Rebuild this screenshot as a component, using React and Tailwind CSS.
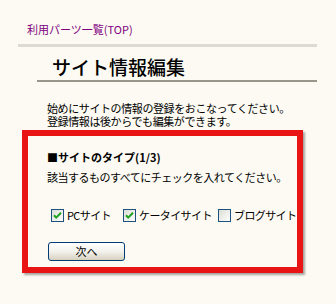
import React from 'react';

function CheckBox({ checked }) {
  return (
    <svg width="13" height="13" viewBox="0 0 13 13" className="shrink-0">
      <defs>
        <linearGradient id="cbg" x1="0" y1="0" x2="1" y2="1">
          <stop offset="0" stopColor="#dcdcd5" />
          <stop offset="1" stopColor="#ffffff" />
        </linearGradient>
      </defs>
      <rect x="0.5" y="0.5" width="12" height="12" fill="url(#cbg)" stroke="#1c5180" />
      {checked && (
        <path d="M3 6.2 L5.2 8.6 L10 3.8" fill="none" stroke="#21a121" strokeWidth="2" />
      )}
    </svg>
  );
}

const options = [
  { label: 'PCサイト', checked: true, width: 'w-[72px]' },
  { label: 'ケータイサイト', checked: true, width: 'w-[95px]' },
  { label: 'ブログサイト', checked: false, width: 'w-auto' },
];

export default function App() {
  return (
    <div className="h-[304px] w-[336px] overflow-hidden bg-[#fcfaf2] font-['Noto_Sans_CJK_JP',sans-serif] text-[11px] leading-[13px] text-black">
      <div className="pl-[27px] pt-[23px]">
        <a className="text-[#800080]">利用パーツ一覧(TOP)</a>
      </div>
      <div className="ml-[18px] mt-[8px] h-[3px] w-[299px] bg-[#dcdad2]" />

      <div className="ml-[37px] mt-[8px] w-[280px] border-b-2 border-[#9a958b] pb-[1px] pl-[15px]">
        <h1 className="text-[19px] leading-[24px] font-medium">サイト情報編集</h1>
      </div>

      <p className="ml-[47px] mt-[20px] tracking-[-0.4px]">
        始めにサイトの情報の登録をおこなってください。<br />
        登録情報は後からでも編集ができます。
      </p>

      <div className="ml-[22px] mt-[2px] h-[143px] w-[281px] border-[6px] border-[#e91515] pl-[19px] pt-[15px] shadow-[2px_2px_2px_rgba(0,0,0,0.35)]">
        <h2 className="font-bold">■サイトのタイプ(1/3)</h2>
        <p className="mt-[7px] tracking-[-0.5px]">該当するものすべてにチェックを入れてください。</p>

        <div className="ml-[4px] mt-[25px] flex h-[13px] items-center">
          {options.map((o) => (
            <label key={o.label} className={`flex items-center gap-[3px] ${o.width}`}>
              <CheckBox checked={o.checked} />
              <span className="whitespace-nowrap tracking-[-0.6px]">{o.label}</span>
            </label>
          ))}
        </div>

        <button className="ml-[1px] mt-[20px] flex h-[19px] w-[77px] items-center justify-center rounded-[3px] border border-[#003c74] bg-gradient-to-b from-white via-[#f3f2ec] to-[#d6d0c0] text-[11px]">
          次へ
        </button>
      </div>
    </div>
  );
}
